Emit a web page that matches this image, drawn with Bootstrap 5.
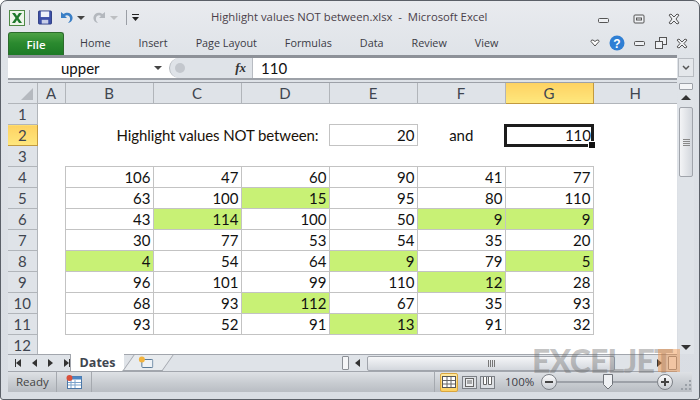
<!DOCTYPE html>
<html lang="en">

<head>
    <meta charset="UTF-8" />
    <title>Highlight values NOT between.xlsx - Microsoft Excel</title>
    <link href="https://cdn.jsdelivr.net/npm/bootstrap@5.3.3/dist/css/bootstrap.min.css" rel="stylesheet" />
    <style>
        html, body { margin: 0; height: 400px; overflow: hidden; background: #fff; }

        .xl-win {
            position: relative;
            width: 700px;
            height: 400px;
            overflow: hidden;
            border: 1px solid #5b6068;
            border-radius: 7px 7px 3px 3px;
            background: linear-gradient(to bottom, #e9ebef 0, #dfe3e8 55px, #d9dde3 100%);
            font-family: "Open Sans", "Noto Sans", sans-serif;
            color: #3b3b45;
        }

        /* title row */
        .xl-title { height: 30px; padding-left: 8px; flex: none; }
        .xl-qat { width: 200px; flex: none; gap: 4px; padding-top: 3px; }
        .xl-sep { width: 1px; height: 15px; background: #9a9ea5; }
        .xl-doc { flex: 1; white-space: nowrap; font-size: 11.3px; color: #4a3f4a; padding-left: 2px; padding-top: 2px; }
        .xl-winbtns { gap: 23px; padding-right: 19px; padding-top: 5px; }

        /* ribbon tabs */
        .xl-tabs { height: 24px; flex: none; }
        .xl-file {
            width: 56px;
            height: 23px;
            margin-left: 7px;
            margin-right: 16px;
            border: 1px solid #2c6b2c;
            border-bottom: 0;
            border-radius: 3px 3px 0 0;
            background: linear-gradient(to bottom, #4da245 0, #2b8a2f 45%, #1c7a25 100%);
            color: #fff;
            font-size: 11.5px;
            font-weight: 600;
            text-align: center;
            line-height: 23px;
        }
        .xl-tab { font-size: 10.8px; color: #3b3b45; white-space: nowrap; }
        .xl-ribicons { gap: 9px; margin-left: auto; padding-right: 11px; }

        /* formula bar */
        .xl-fbar-wrap { height: 25px; flex: none; }
        .xl-fbar {
            height: 25px;
            margin-left: 7px;
            border-top: 3px solid #8d9198;
            border-bottom: 2px solid #9da1a8;
            width: 669px;
            background: #fff;
        }
        .xl-name { width: 161px; font: 15px "Lato", sans-serif; color: #111; padding-left: 53px; }
        .xl-name-arrow { flex: none; width: 0; height: 0; border: 4px solid transparent; border-top: 4px solid #444; border-bottom: 0; }
        .xl-name .xl-name-arrow { margin-left: 54px; }
        .xl-fbtn { width: 84px; height: 20px; background: #dfe3e8; border-right: 1px solid #b8bcc2; border-radius: 12px 0 0 12px; border-left: 1px solid #b6bac0; }
        .xl-fbtn i { width: 10px; height: 10px; border-radius: 50%; background: #c3c7cd; margin-left: 5px; }
        .xl-fx { font: italic bold 13px "Liberation Serif", serif; color: #333; margin-left: auto; margin-right: 6px; }
        .xl-fval { font: 15px "Lato", sans-serif; color: #111; padding-left: 8px; }
        .xl-fexp { width: 16px; height: 19px; margin: 3px 0 0 1px; background: #e4e7eb; border: 1px solid #b8bcc2; }

        /* sheet */
        .xl-gap { height: 2px; flex: none; }
        .xl-sheetrow { margin-left: 7px; height: 272px; flex: none; }
        .xl-gridwrap { width: 669px; height: 272px; overflow: hidden; background: #fff; border-top: 1px solid #9da1a8; }
        .xl-grid { border-collapse: collapse; table-layout: fixed; width: 669px; font: 15px "Lato", sans-serif; color: #111; }
        .xl-grid th, .xl-grid td { height: 21px; padding: 0; line-height: 20px; }
        .xl-grid thead th { height: 20px; }
        .xl-grid th { background: #dfe3e8; font-weight: 400; text-align: center; color: #3f4650; border: 1px solid #b1b5ba; border-top: 0; }
        .xl-grid th:first-child { border-left: 0; }
        .xl-grid thead th:last-child { border-right: 0; }
        .xl-corner { position: relative; }
        .xl-corner::after { content: ""; position: absolute; right: 4px; bottom: 3px; border-style: solid; border-width: 0 0 12px 12px; border-color: transparent transparent #b5b9bf transparent; }
        .xl-grid th.xl-on { background: linear-gradient(to bottom, #fdd262 0, #ffe77d 100%); border-color: #c29a3f; }
        .xl-grid td.xl-c { border: 1px solid #c3c3c3; text-align: right; padding-right: 2px; }
        .xl-grid td.xl-g { background: #c8f175; }
        .xl-grid td.xl-lbl { text-align: right; padding-right: 10px; white-space: nowrap; color: #1a1208; letter-spacing: -.1px; }
        .xl-grid td.xl-mid { text-align: center; }
        .xl-grid td.xl-sel { position: relative; outline: 3px solid #1c1c1c; outline-offset: -2px; padding-right: 2px; text-align: right; }
        .xl-sel::after { content: ""; position: absolute; right: -3px; bottom: -3px; width: 6px; height: 6px; background: #111; border: 1px solid #fff; box-sizing: content-box; }

        /* vertical scrollbar */
        .xl-vbar { width: 16px; height: 272px; background: #dfe3e8; margin-left: 1px; padding: 0 1px; }
        .xl-vsplit { height: 7px; margin-top: 1px; background: #f4f5f7; border: 1px solid #9da1a8; border-radius: 1px; }
        .xl-up { width: 0; height: 0; border: 5px solid transparent; border-bottom: 5px solid #333; border-top: 0; margin: 5px auto 7px; }
        .xl-dn { width: 0; height: 0; border: 5px solid transparent; border-top: 5px solid #333; border-bottom: 0; margin: auto auto 4px; }
        .xl-vthumb { height: 70px; background: linear-gradient(to right, #f3f4f6, #d3d7dd); border: 1px solid #a0a4ab; border-radius: 2px; }
        .xl-grip-h { width: 7px; height: 7px; background: repeating-linear-gradient(to bottom, #888 0 1px, transparent 1px 2px); }

        /* sheet tabs + horizontal scrollbar */
        .xl-sheets { height: 18px; flex: none; margin-left: 7px; width: 669px; background: #dfe3e8; border-top: 1px solid #a2a6ad; border-bottom: 1px solid #a2a6ad; }
        .xl-nav { width: 63px; gap: 7px; padding-left: 7px; height: 16px; border-right: 1px solid #a2a6ad; }
        .xl-tri-l { flex: none; width: 0; height: 0; border: 4px solid transparent; border-right: 5px solid #333; border-left: 0; }
        .xl-tri-r { flex: none; width: 0; height: 0; border: 4px solid transparent; border-left: 5px solid #333; border-right: 0; }
        .xl-bar { width: 1px; height: 8px; background: #333; }
        .xl-sheet-on { width: 53px; height: 17px; margin-top: -1px; background: #fff; font-size: 12.5px; font-weight: 700; color: #3f4650; text-align: center; line-height: 17px; }
        .xl-sheet-new { width: 40px; height: 16px; border-bottom: 1px solid #a2a6ad; transform: skewX(-35deg); border-right: 1px solid #a2a6ad; border-left: 1px solid #a2a6ad; margin-left: 4px; background: #e8ebee; }
        .xl-sheet-new svg { transform: skewX(35deg); margin-left: 9px; }
        .xl-hsplit { width: 7px; height: 14px; margin-left: auto; background: #f4f5f7; border: 1px solid #8b8f95; border-radius: 1px; }
        .xl-hleft { margin: 0 7px 0 6px; }
        .xl-hthumb { width: 248px; height: 15px; background: linear-gradient(to bottom, #f5f6f8, #d3d7dd); border: 1px solid #a0a4ab; border-radius: 2px; }
        .xl-grip-v { width: 7px; height: 7px; background: repeating-linear-gradient(to right, #777 0 1px, transparent 1px 2px); }
        .xl-hright { margin-left: 42px; margin-right: 6px; }
        .xl-hsplit-end { width: 9px; height: 14px; background: #f4f5f7; border: 1px solid #8b8f95; border-radius: 1px; }

        /* status bar */
        .xl-status { height: 20px; flex: none; margin-left: 7px; width: 684px; background: linear-gradient(to bottom, #dee1e5 0, #c8ccd1 55%, #b9bdc3 100%); font-size: 11.5px; color: #444; }
        .xl-ready { width: 49px; padding-left: 8px; height: 20px; line-height: 20px; border-right: 1px solid #a5a9af; }
        .xl-macro { width: 35px; height: 20px; border-right: 1px solid #a5a9af; padding-left: 9px; }
        .xl-views { gap: 3px; margin-left: auto; height: 20px; padding-left: 5px; border-left: 1px solid #a5a9af; }
        .xl-view { width: 15px; height: 13px; border: 1px solid #7c8086; background: #dcdfe3; }
        .xl-view-on { width: 18px; height: 19px; border: 1px solid #d9a53e; border-radius: 2px; background: linear-gradient(to bottom, #ffe9a0, #fdd161); margin-right: 1px; }
        .xl-zoomtxt { font-size: 11.5px; line-height: 14px; margin-left: 10px; width: 36px; color: #3c3c46; }
        .xl-round { flex: none; width: 16px; height: 16px; border-radius: 50%; border: 1px solid #7d8187; background: linear-gradient(to bottom, #fbfbfc, #c9cdd3); }
        .xl-slide { width: 100px; height: 2px; background: #9da1a8; position: relative; }
        .xl-knob { position: absolute; left: 46px; top: -8px; }
        .xl-grip { width: 13px; margin-left: 6px; }

        /* watermark lies over the scrollbar */
        .xl-mark { position: absolute; left: 531px; top: 349px; font: 900 32px/22px "Lato", "Liberation Sans", sans-serif; letter-spacing: -.8px; color: rgba(110, 110, 110, .42); white-space: nowrap; }
        .xl-markbox { position: absolute; left: 657px; top: 348px; width: 22px; height: 23px; background: rgba(240, 140, 60, .45); }
    </style>
</head>

<body>
    <div class="xl-win d-flex flex-column">

        <!-- title row -->
        <div class="xl-title d-flex align-items-center">
            <div class="xl-qat d-flex align-items-center">
                <svg width="16" height="16" viewBox="0 0 16 16">
                    <rect x=".5" y=".5" width="15" height="15" fill="#eef5ea" stroke="#4f8a45" />
                    <path d="M3 3h3l2 3 2-3h3l-3.500 5 3.500 5h-3l-2-3-2 3H3l3.500-5z" fill="#1f7a2c" />
                </svg>
                <span class="xl-sep"></span>
                <svg class="ms-1" width="14" height="15" viewBox="0 0 15 15">
                    <rect x=".5" y=".5" width="14" height="14" rx="1" fill="#3d50a8" stroke="#2b3a80" />
                    <rect x="3" y="1" width="9" height="6" fill="#eef1fa" />
                    <rect x="4" y="10" width="7" height="4" fill="#c9cfe8" />
                </svg>
                <svg class="ms-1" width="13" height="14" viewBox="0 0 13 14">
                    <path d="M1 1v6h6L5 5c2-1.500 4.500-.5 5 2 .4 2-.5 3.500-2 5 3-.5 5-3 4.500-6C12 2.500 7.500 0 3.500 3z" fill="#3b7fc6" />
                </svg>
                <span class="xl-name-arrow"></span>
                <svg class="ms-1" width="13" height="14" viewBox="0 0 13 14">
                    <path d="M12 1v6H6l2-2C6 3.500 3.500 4.500 3 7c-.4 2 .5 3.500 2 5-3-.5-5-3-4.500-6C1 2.500 5.500 0 9.500 3z" fill="#b4b8be" />
                </svg>
                <span class="xl-name-arrow opacity-25"></span>
                <span class="xl-sep ms-1"></span>
                <svg width="9" height="9" viewBox="0 0 9 9">
                    <path d="M1 1h7v1H1zM1 4h7L4.500 8z" fill="#222" />
                </svg>
            </div>
            <div class="xl-doc">Highlight values NOT between.xlsx&nbsp; -&nbsp; Microsoft Excel</div>
            <div class="xl-winbtns d-flex align-items-center">
                <svg width="12" height="12" viewBox="0 0 12 12"><rect x=".5" y="5.500" width="10" height="4" rx="1" fill="#eef0f3" stroke="#555" /></svg>
                <svg width="12" height="12" viewBox="0 0 12 12"><rect x="1" y="2" width="10" height="8" rx="1" fill="#eef0f3" stroke="#555" /><rect x="3.500" y="5" width="5" height="2" fill="none" stroke="#555" /></svg>
                <svg width="12" height="12" viewBox="0 0 12 12"><path d="M1 2l2-1 3 3 3-3 2 1-3 4 3 4-2 1-3-3-3 3-2-1 3-4z" fill="#eef0f3" stroke="#555" /></svg>
            </div>
        </div>

        <!-- ribbon tabs -->
        <div class="xl-tabs d-flex align-items-end">
            <div class="xl-file">File</div>
            <div class="d-flex align-items-center h-100">
                <span class="xl-tab">Home</span>
                <span class="xl-tab ms-4 ps-1">Insert</span>
                <span class="xl-tab ms-4 ps-1">Page Layout</span>
                <span class="xl-tab ms-4 ps-1">Formulas</span>
                <span class="xl-tab ms-4 ps-1">Data</span>
                <span class="xl-tab ms-4 ps-1">Review</span>
                <span class="xl-tab ms-4 ps-1">View</span>
            </div>
            <div class="xl-ribicons d-flex align-items-center h-100">
                <svg width="10" height="8" viewBox="0 0 10 8"><path d="M1 2.500Q1 .5 3 1L5 2.500 7 1q2-.5 2 1.500L5 7z" fill="#fff" stroke="#555" /></svg>
                <svg width="16" height="16" viewBox="0 0 16 16"><circle cx="8" cy="8" r="7.500" fill="#2f7fd4" /><text x="8" y="12.500" text-anchor="middle" font-family="Liberation Sans" font-weight="700" font-size="12" fill="#fff">?</text></svg>
                <svg width="12" height="8" viewBox="0 0 12 8"><rect x=".5" y="2.500" width="10" height="4" rx="1" fill="#eef0f3" stroke="#555" /></svg>
                <svg width="12" height="12" viewBox="0 0 12 12"><rect x="4.500" y=".5" width="7" height="7" fill="#eef0f3" stroke="#555" /><rect x=".5" y="4.500" width="7" height="7" fill="#eef0f3" stroke="#555" /></svg>
                <svg width="12" height="11" viewBox="0 0 12 11"><path d="M1 2l2-1 3 3 3-3 2 1-3 3.500 3 3.500-2 1-3-3-3 3-2-1 3-3.500z" fill="#eef0f3" stroke="#555" /></svg>
            </div>
        </div>

        <!-- formula bar -->
        <div class="xl-fbar-wrap d-flex">
            <div class="xl-fbar d-flex align-items-center">
                <div class="xl-name d-flex align-items-center">upper<span class="xl-name-arrow"></span></div>
                <div class="xl-fbtn d-flex align-items-center"><i></i><span class="xl-fx">fx</span></div>
                <div class="xl-fval">110</div>
            </div>
            <div class="xl-fexp d-flex align-items-center justify-content-center">
                <svg width="8" height="6" viewBox="0 0 8 6"><path d="M1 1l3 3 3-3" fill="none" stroke="#555" stroke-width="1.500" /></svg>
            </div>
        </div>

        <div class="xl-gap"></div>

        <!-- sheet and scrollbar -->
        <div class="xl-sheetrow d-flex">
            <div class="xl-gridwrap">
                <table class="xl-grid">
                    <colgroup>
                        <col style="width:29px"><col style="width:28px"><col style="width:88px"><col style="width:88px"><col style="width:88px"><col style="width:88px"><col style="width:88px"><col style="width:88px"><col style="width:84px">
                    </colgroup>
                    <thead>
                        <tr><th class="xl-corner"></th><th>A</th><th>B</th><th>C</th><th>D</th><th>E</th><th>F</th><th class="xl-on">G</th><th>H</th></tr>
                    </thead>
                    <tbody>
                        <tr><th>1</th><td colspan="8"></td></tr>
                        <tr><th class="xl-on">2</th><td></td><td class="xl-lbl" colspan="3">Highlight values NOT between:</td><td class="xl-c">20</td><td class="xl-mid">and</td><td class="xl-sel">110</td><td></td></tr>
                        <tr><th>3</th><td colspan="8"></td></tr>
                        <tr><th>4</th><td></td><td class="xl-c">106</td><td class="xl-c">47</td><td class="xl-c">60</td><td class="xl-c">90</td><td class="xl-c">41</td><td class="xl-c">77</td><td></td></tr>
                        <tr><th>5</th><td></td><td class="xl-c">63</td><td class="xl-c">100</td><td class="xl-c xl-g">15</td><td class="xl-c">95</td><td class="xl-c">80</td><td class="xl-c">110</td><td></td></tr>
                        <tr><th>6</th><td></td><td class="xl-c">43</td><td class="xl-c xl-g">114</td><td class="xl-c">100</td><td class="xl-c">50</td><td class="xl-c xl-g">9</td><td class="xl-c xl-g">9</td><td></td></tr>
                        <tr><th>7</th><td></td><td class="xl-c">30</td><td class="xl-c">77</td><td class="xl-c">53</td><td class="xl-c">54</td><td class="xl-c">35</td><td class="xl-c">20</td><td></td></tr>
                        <tr><th>8</th><td></td><td class="xl-c xl-g">4</td><td class="xl-c">54</td><td class="xl-c">64</td><td class="xl-c xl-g">9</td><td class="xl-c">79</td><td class="xl-c xl-g">5</td><td></td></tr>
                        <tr><th>9</th><td></td><td class="xl-c">96</td><td class="xl-c">101</td><td class="xl-c">99</td><td class="xl-c">110</td><td class="xl-c xl-g">12</td><td class="xl-c">28</td><td></td></tr>
                        <tr><th>10</th><td></td><td class="xl-c">68</td><td class="xl-c">93</td><td class="xl-c xl-g">112</td><td class="xl-c">67</td><td class="xl-c">35</td><td class="xl-c">93</td><td></td></tr>
                        <tr><th>11</th><td></td><td class="xl-c">93</td><td class="xl-c">52</td><td class="xl-c">91</td><td class="xl-c xl-g">13</td><td class="xl-c">91</td><td class="xl-c">32</td><td></td></tr>
                        <tr><th>12</th><td colspan="8"></td></tr>
                    </tbody>
                </table>
            </div>
            <div class="xl-vbar d-flex flex-column">
                <div class="xl-vsplit"></div>
                <div class="xl-up"></div>
                <div class="xl-vthumb d-flex align-items-center justify-content-center"><span class="xl-grip-h"></span></div>
                <div class="xl-dn"></div>
            </div>
        </div>

        <!-- sheet tabs -->
        <div class="xl-sheets d-flex align-items-center">
            <div class="xl-nav d-flex align-items-center">
                <span class="d-flex align-items-center"><span class="xl-bar"></span><span class="xl-tri-l"></span></span>
                <span class="xl-tri-l ms-1"></span>
                <span class="xl-tri-r ms-1"></span>
                <span class="d-flex align-items-center ms-1"><span class="xl-tri-r"></span><span class="xl-bar"></span></span>
            </div>
            <div class="xl-sheet-on">Dates</div>
            <div class="xl-sheet-new d-flex align-items-center">
                <svg width="15" height="13" viewBox="0 0 15 13"><rect x="3.500" y="3.500" width="11" height="8" rx="1" fill="#eef2f6" stroke="#5a7a98" /><circle cx="3.500" cy="3.500" r="3" fill="#f2b33d" /></svg>
            </div>
            <div class="xl-hsplit"></div>
            <span class="xl-tri-l xl-hleft"></span>
            <div class="xl-hthumb d-flex align-items-center justify-content-center"><span class="xl-grip-v"></span></div>
            <span class="xl-tri-r xl-hright"></span>
            <div class="xl-hsplit-end"></div>
        </div>

        <!-- status bar -->
        <div class="xl-status d-flex align-items-center">
            <div class="xl-ready">Ready</div>
            <div class="xl-macro d-flex align-items-center">
                <svg width="16" height="14" viewBox="0 0 16 14">
                    <rect x="1.500" y="1.500" width="14" height="12" fill="#fff" stroke="#4c78a8" />
                    <rect x="1.500" y="1.500" width="14" height="3" fill="#4c86c4" />
                    <path d="M5 5v8M9 5v8M2 7.500h13M2 10h13" stroke="#7ba3cc" />
                    <circle cx="3.500" cy="3" r="3" fill="#d9503c" />
                </svg>
            </div>
            <div class="xl-views d-flex align-items-center">
                <div class="xl-view-on d-flex align-items-center justify-content-center">
                    <svg width="14" height="12" viewBox="0 0 14 12"><rect x=".5" y=".5" width="13" height="11" fill="#fff" stroke="#555" /><path d="M5 1v10M9 1v10M1 4.500h12M1 8h12" stroke="#666" /></svg>
                </div>
                <div class="xl-view d-flex align-items-center justify-content-center">
                    <svg width="9" height="9" viewBox="0 0 9 9"><rect x=".5" y=".5" width="8" height="8" fill="#eceef0" stroke="#666" /><path d="M2 3h5M2 5h5" stroke="#666" /></svg>
                </div>
                <div class="xl-view d-flex align-items-start justify-content-center">
                    <svg width="9" height="8" viewBox="0 0 9 8"><path d="M.5 0v7.500h3V0M5.500 0v7.500h3V0" fill="#fff" stroke="#666" /></svg>
                </div>
            </div>
            <div class="xl-zoomtxt">100%</div>
            <div class="xl-round d-flex align-items-center justify-content-center">
                <svg width="8" height="8" viewBox="0 0 8 8"><rect y="3" width="8" height="2" fill="#444" /></svg>
            </div>
            <div class="xl-slide">
                <svg class="xl-knob" width="10" height="18" viewBox="0 0 10 18"><path d="M.5 1.500h9v10L5 16 .5 11.500z" fill="#eef0f3" stroke="#6f7379" /></svg>
            </div>
            <div class="xl-round d-flex align-items-center justify-content-center">
                <svg width="8" height="8" viewBox="0 0 8 8"><path d="M3 0h2v3h3v2H5v3H3V5H0V3h3z" fill="#444" /></svg>
            </div>
            <div class="xl-grip d-flex align-self-end">
                <svg width="13" height="13" viewBox="0 0 13 13"><path d="M10 1h2v2h-2zM6 5h2v2H6zM10 5h2v2h-2zM2 9h2v2H2zM6 9h2v2H6zM10 9h2v2h-2z" fill="#9aa0a7" /></svg>
            </div>
        </div>

        <!-- watermark -->
        <div class="xl-mark">EXCELJET</div>
        <div class="xl-markbox"></div>
    </div>
    <script src="https://cdn.jsdelivr.net/npm/bootstrap@5.3.3/dist/js/bootstrap.bundle.min.js"></script>
</body>

</html>
